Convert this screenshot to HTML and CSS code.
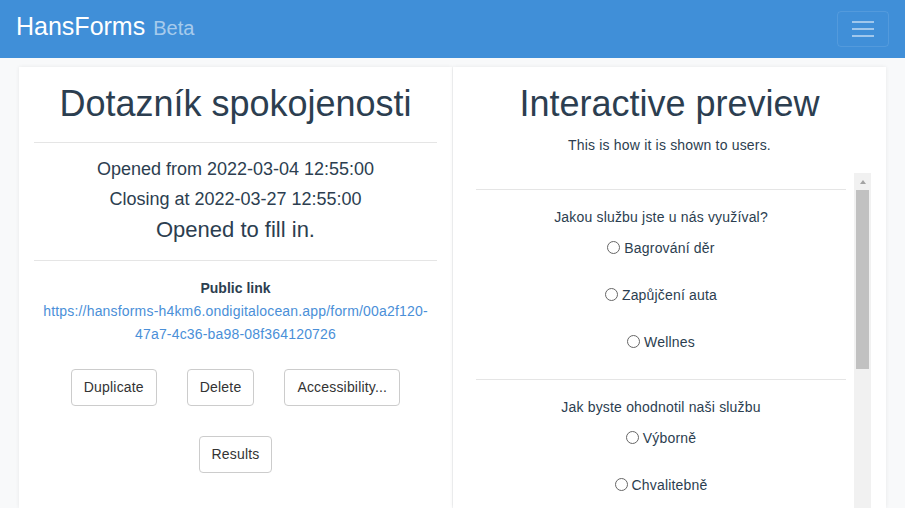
FILE: index.html
```html
<!DOCTYPE html>
<html lang="cs">
<head>
<meta charset="utf-8">
<title>HansForms</title>
<link rel="stylesheet" href="styles.css">
</head>
<body>
<nav class="navbar">
  <div class="brand"><span class="brand-name">HansForms</span><span class="brand-tag">Beta</span></div>
  <button class="toggler" type="button" aria-label="Menu">
    <svg width="22" height="16" viewBox="0 0 22 16"><path d="M0 1H22M0 8H22M0 15H22" stroke="rgba(255,255,255,0.5)" stroke-width="2" fill="none"/></svg>
  </button>
</nav>
<main class="container">
  <section class="card">
    <h1>Dotazník spokojenosti</h1>
    <hr>
    <p class="dates">Opened from 2022-03-04 12:55:00<br>Closing at 2022-03-27 12:55:00</p>
    <p class="status">Opened to fill in.</p>
    <hr class="hr-status">
    <div class="public">
      <div class="public-label">Public link</div>
      <a class="public-url" href="#">https://hansforms-h4km6.ondigitalocean.app/form/00a2f120-<wbr>47a7-4c36-ba98-08f364120726</a>
    </div>
    <div class="actions">
      <button class="btn" type="button">Duplicate</button>
      <button class="btn" type="button">Delete</button>
      <button class="btn" type="button">Accessibility...</button>
      <button class="btn" type="button">Results</button>
    </div>
  </section>
  <section class="card">
    <h1>Interactive preview</h1>
    <p class="subtitle">This is how it is shown to users.</p>
    <div class="preview">
      <div class="preview-body">
        <hr class="q-sep">
        <div class="question">Jakou službu jste u nás využíval?</div>
        <label class="option"><input type="radio" name="q1">Bagrování děr</label>
        <label class="option"><input type="radio" name="q1">Zapůjčení auta</label>
        <label class="option"><input type="radio" name="q1">Wellnes</label>
        <hr class="q-sep">
        <div class="question">Jak byste ohodnotil naši službu</div>
        <label class="option"><input type="radio" name="q2">Výborně</label>
        <label class="option"><input type="radio" name="q2">Chvalitebně</label>
      </div>
      <div class="scrollbar">
        <div class="sb-up"><span class="sb-arrow"></span></div>
        <div class="sb-thumb"></div>
      </div>
    </div>
  </section>
</main>
</body>
</html>
```
FILE: styles.css
```css
html, body {
  margin: 0;
  height: 100%;
  overflow: hidden;
}
body {
  background: #f8f9fa;
  font-family: "Liberation Sans", Arial, sans-serif;
  font-size: 14px;
  color: #2c3e50;
}
.navbar {
  height: 58px;
  box-sizing: border-box;
  background: #408fd8;
  display: flex;
  align-items: center;
  justify-content: space-between;
  padding: 0 16px 0 16px;
}
.brand {
  line-height: 30px;
  padding-bottom: 3px;
  white-space: nowrap;
}
.brand-name {
  font-size: 25px;
  color: #fff;
}
.brand-tag {
  font-size: 20px;
  color: rgba(255, 255, 255, 0.55);
  margin-left: 8px;
}
.toggler {
  width: 52px;
  height: 36px;
  padding: 0;
  border: 1px solid rgba(255, 255, 255, 0.1);
  border-radius: 4px;
  background: transparent;
  display: flex;
  align-items: center;
  justify-content: center;
}
.toggler svg { display: block; }
.container {
  padding: 9px 19px 0;
  display: grid;
  grid-template-columns: 1fr 1fr;
  column-gap: 1px;
}
.card {
  background: #fff;
  box-shadow: 0 0 4px rgba(0, 0, 0, 0.07);
  padding: 0 15px;
  height: 441px;
  text-align: center;
  min-width: 0;
  letter-spacing: 0.18px;
}
h1 {
  font-size: 36px;
  line-height: 40px;
  font-weight: 400;
  margin: 17px 0 0;
  color: #2c3e50;
  letter-spacing: 0;
}
hr {
  border: 0;
  border-top: 1px solid #e5e5e5;
  height: 0;
  margin: 18px 0 0;
}
.dates {
  font-size: 18px;
  line-height: 30px;
  margin: 11px 0 0;
  letter-spacing: 0;
}
.status {
  font-size: 22px;
  line-height: 32px;
  margin: 0;
  letter-spacing: 0;
}
.hr-status { margin-top: 14px; }
.public {
  margin-top: 16px;
  line-height: 23px;
}
.public-label {
  font-weight: 700;
  color: #2c3e50;
  letter-spacing: 0;
}
.public-url {
  color: #4a8fd8;
  text-decoration: none;
}
.actions {
  margin-top: 23px;
  display: flex;
  flex-wrap: wrap;
  justify-content: center;
  gap: 30px;
}
.btn {
  font-family: "Liberation Sans", Arial, sans-serif;
  font-size: 14px;
  line-height: 19px;
  letter-spacing: 0.18px;
  padding: 8px 12px;
  border: 1px solid #ccc;
  border-radius: 4px;
  background: #fff;
  color: #333;
}
.subtitle {
  margin: 11px 0 0;
  line-height: 20px;
  color: #2c3e50;
}
.preview {
  margin-top: 18px;
  height: 335px;
  display: flex;
}
.preview-body {
  flex: 1;
  min-width: 0;
  padding: 16px 8px 0;
  overflow: hidden;
}
.q-sep { margin-top: 0; }
.question {
  margin: 17px 0 11px;
  line-height: 20px;
}
.option {
  display: block;
  line-height: 20px;
  margin-bottom: 27px;
}
.option input {
  -webkit-appearance: none;
  appearance: none;
  width: 13px;
  height: 13px;
  box-sizing: border-box;
  border: 1px solid #666;
  border-radius: 50%;
  background: #fff;
  margin: 0 4px 0 0;
  vertical-align: -1px;
}
.scrollbar {
  flex: none;
  width: 17px;
  background: #f1f1f1;
  display: flex;
  flex-direction: column;
}
.sb-up {
  height: 17px;
  display: flex;
  align-items: center;
  justify-content: center;
}
.sb-arrow {
  width: 0;
  height: 0;
  border-left: 3.5px solid transparent;
  border-right: 3.5px solid transparent;
  border-bottom: 4px solid #a3a3a3;
}
.sb-thumb {
  height: 179px;
  margin: 0 2px;
  background: #c1c1c1;
}
```
